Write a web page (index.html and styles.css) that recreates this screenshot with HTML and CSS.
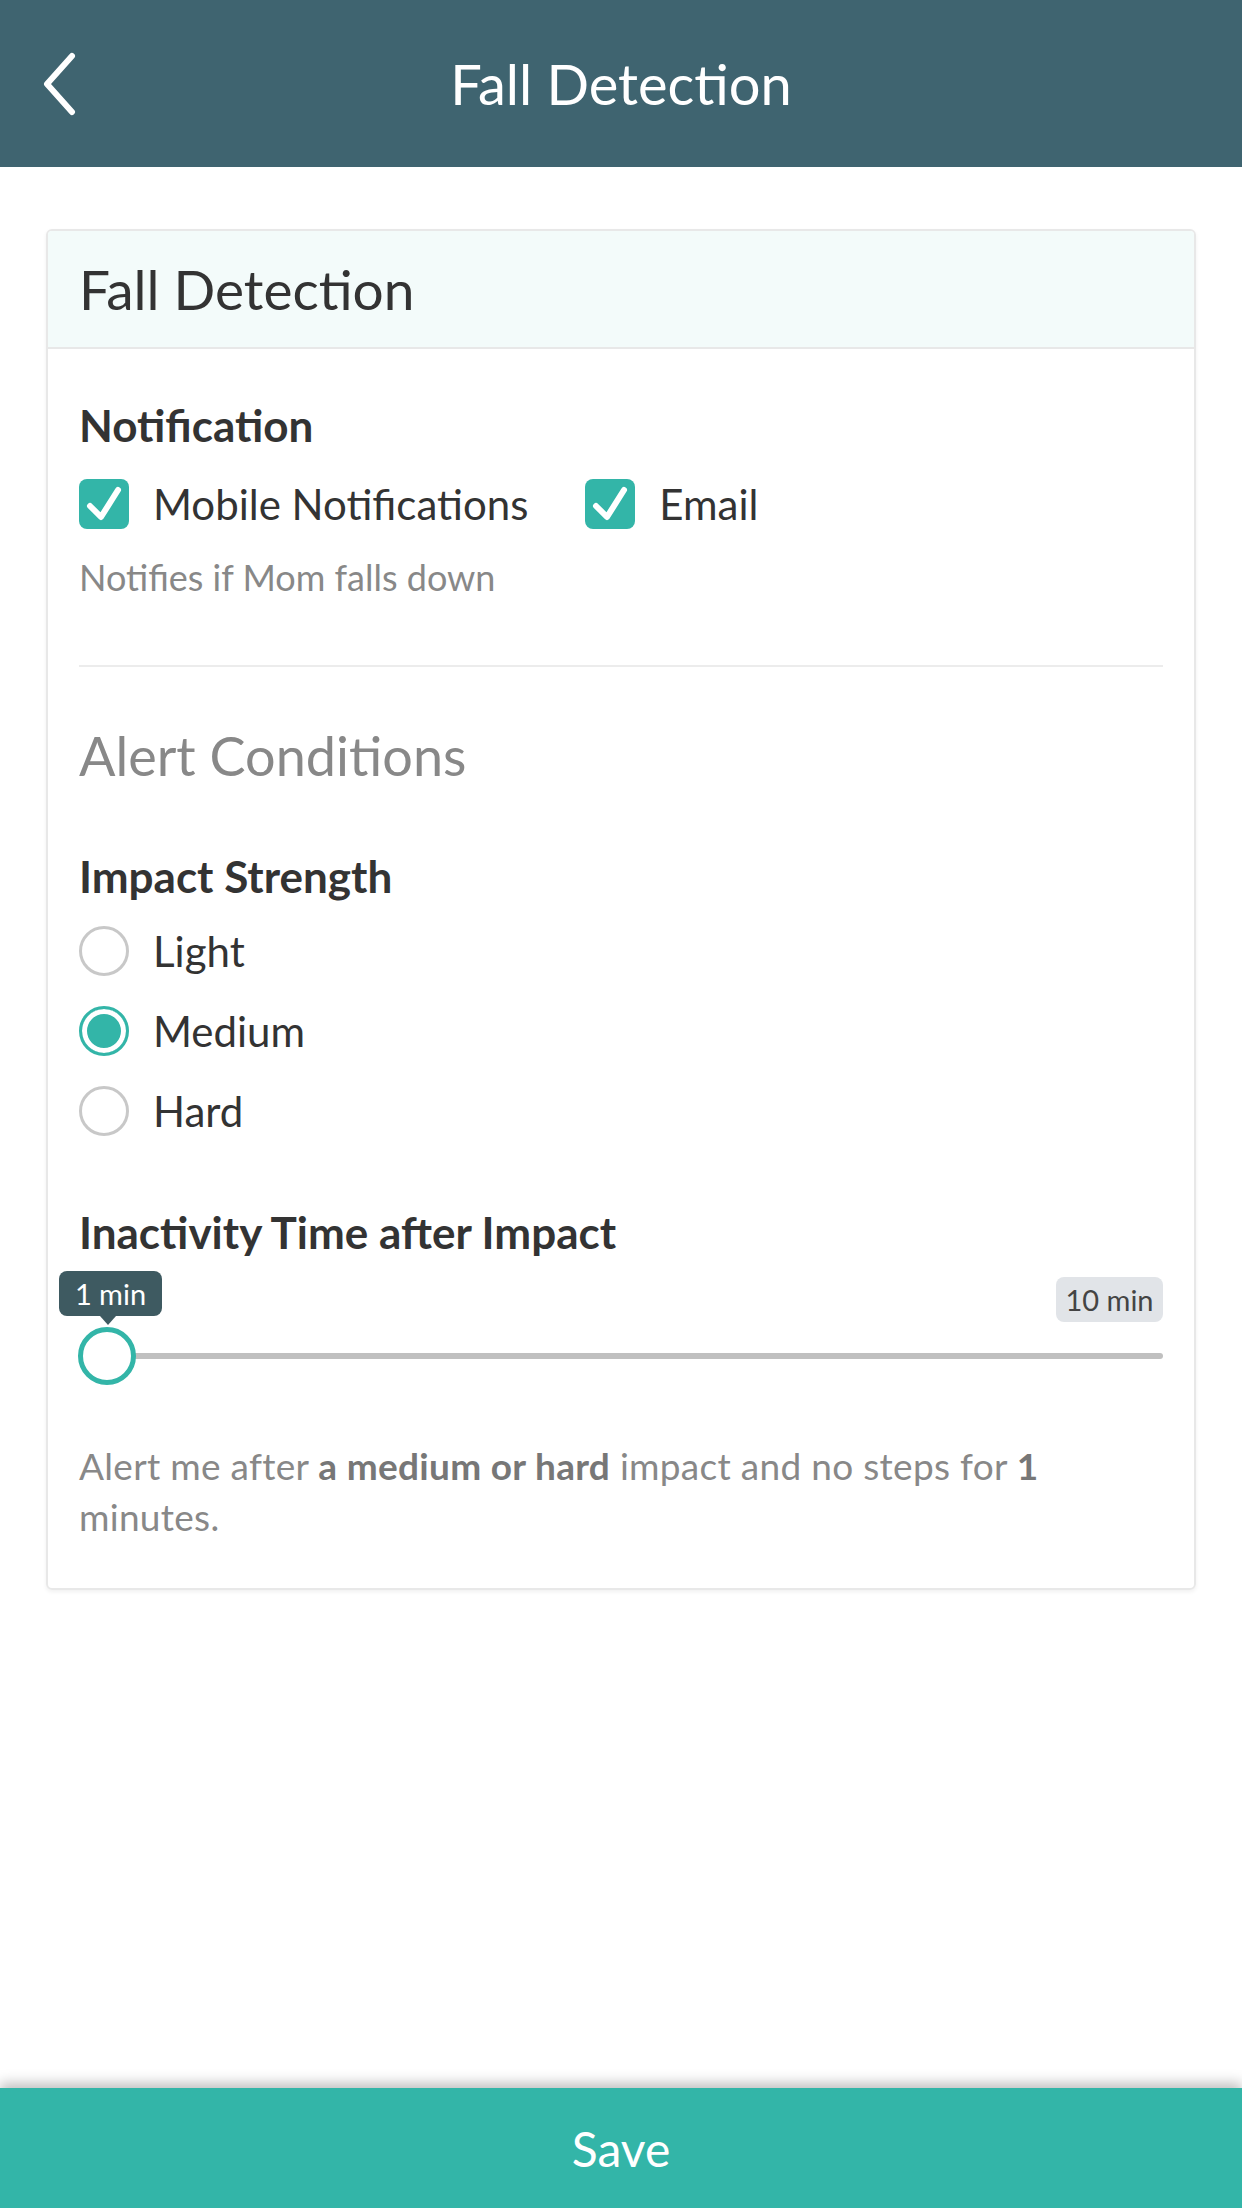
FILE: index.html
```html
<!DOCTYPE html>
<html lang="en">
<head>
<meta charset="utf-8">
<title>Fall Detection</title>
<link rel="stylesheet" href="styles.css">
</head>
<body>
<header class="topbar">
  <button class="back" aria-label="Back">
    <svg width="40" height="64" viewBox="0 0 40 64"><polyline points="30,4 5,32 30,60" fill="none" stroke="#fff" stroke-width="6" stroke-linecap="round" stroke-linejoin="round"/></svg>
  </button>
  <h1 class="topbar-title">Fall Detection</h1>
  <span class="spacer"></span>
</header>

<main class="content">
  <section class="card">
    <div class="card-head">Fall Detection</div>
    <div class="card-body">
      <div class="label notif-label">Notification</div>
      <div class="check-row">
        <label class="check">
          <span class="box"><svg width="50" height="50" viewBox="0 0 50 50"><polyline points="11,27 22,38 39,11" fill="none" stroke="#fff" stroke-width="6" stroke-linecap="round" stroke-linejoin="round"/></svg></span>
          <span>Mobile Notifications</span>
        </label>
        <label class="check">
          <span class="box"><svg width="50" height="50" viewBox="0 0 50 50"><polyline points="11,27 22,38 39,11" fill="none" stroke="#fff" stroke-width="6" stroke-linecap="round" stroke-linejoin="round"/></svg></span>
          <span>Email</span>
        </label>
      </div>
      <p class="note">Notifies if Mom falls down</p>
      <hr class="divider">
      <h2 class="sub-title">Alert Conditions</h2>
      <div class="label impact-label">Impact Strength</div>
      <div class="radios">
        <label class="radio"><span class="dot"></span><span>Light</span></label>
        <label class="radio selected"><span class="dot"></span><span>Medium</span></label>
        <label class="radio"><span class="dot"></span><span>Hard</span></label>
      </div>
      <div class="label inact-label">Inactivity Time after Impact</div>
      <div class="slider">
        <div class="slider-labels">
          <span class="tip">1 min</span>
          <span class="max">10 min</span>
        </div>
        <div class="track-row">
          <div class="track"></div>
          <span class="thumb"></span>
        </div>
      </div>
      <p class="summary">Alert me after <b>a medium or hard</b> impact and no steps for <b>1</b> minutes.</p>
    </div>
  </section>
</main>

<footer class="savebar">Save</footer>
</body>
</html>
```

FILE: styles.css
```css
* { box-sizing: border-box; }
html, body { margin: 0; padding: 0; }
body {
  width: 1242px;
  height: 2208px;
  display: flex;
  flex-direction: column;
  font-family: Lato, "Open Sans", sans-serif;
  color: #333;
  background: #fff;
  overflow: hidden;
}

.topbar {
  height: 167px;
  background: #3f6470;
  display: flex;
  align-items: center;
  flex-shrink: 0;
}
.back {
  width: 120px;
  height: 100%;
  background: none;
  border: 0;
  padding: 0 0 0 42px;
  display: flex;
  align-items: center;
  cursor: pointer;
}
.topbar-title {
  flex: 1;
  margin: 0;
  text-align: center;
  color: #fff;
  font-weight: 400;
  font-size: 56px;
  line-height: 1;
}
.spacer { width: 120px; }

.content {
  padding: 62px 46px 0;
}
.card {
  border: 2px solid #e8e8e8;
  border-radius: 6px;
  box-shadow: 0 2px 4px rgba(0,0,0,0.06);
  overflow: hidden;
}
.card-head {
  height: 118px;
  background: #f3fbfa;
  border-bottom: 2px solid #e8e8e8;
  padding-left: 31px;
  display: flex;
  align-items: center;
  font-size: 55px;
  color: #333;
}
.card-body {
  padding: 40px 31px 46px;
}

.label {
  font-weight: 700;
  font-size: 44px;
  color: #333;
}
.notif-label { line-height: 72px; }

.check-row {
  margin-top: 12px;
  height: 62px;
  display: flex;
  align-items: center;
  gap: 57px;
}
.check {
  display: flex;
  align-items: center;
  gap: 24px;
  font-size: 42px;
}
.box {
  width: 50px;
  height: 50px;
  border-radius: 8px;
  background: #33b5a8;
  display: block;
}
.box svg { display: block; }

.note {
  margin: 20px 0 0;
  font-size: 36px;
  line-height: 44px;
  color: #888;
}
.divider {
  margin: 66px 0 0;
  border: 0;
  border-top: 2px solid #ececec;
}
.sub-title {
  margin: 54px 0 0;
  font-size: 54px;
  line-height: 70px;
  font-weight: 400;
  color: #888;
}
.impact-label { margin-top: 55px; line-height: 60px; }

.radios { margin-top: 5px; }
.radio {
  height: 80px;
  display: flex;
  align-items: center;
  gap: 24px;
  font-size: 42px;
}
.dot {
  width: 50px;
  height: 50px;
  border-radius: 50%;
  border: 3px solid #c8c8c8;
  display: block;
  background: #fff;
}
.radio.selected .dot {
  border-color: #33b5a8;
  box-shadow: inset 0 0 0 5px #fff, inset 0 0 0 30px #33b5a8;
}

.inact-label { margin-top: 51px; line-height: 60px; }

.slider { margin-top: 9px; }
.slider-labels {
  display: flex;
  justify-content: space-between;
  align-items: flex-start;
}
.tip {
  position: relative;
  margin-left: -20px;
  width: 103px;
  height: 45px;
  border-radius: 8px;
  background: #3e5a61;
  color: #fff;
  font-size: 29px;
  display: flex;
  align-items: center;
  justify-content: center;
}
.tip::after {
  content: "";
  position: absolute;
  left: 41px;
  bottom: -9px;
  border-left: 8px solid transparent;
  border-right: 8px solid transparent;
  border-top: 9px solid #3e5a61;
}
.max {
  margin-top: 6px;
  width: 107px;
  height: 45px;
  border-radius: 8px;
  background: #e1e4e8;
  color: #444;
  font-size: 29px;
  display: flex;
  align-items: center;
  justify-content: center;
}
.track-row {
  position: relative;
  margin-top: 5px;
  height: 58px;
  display: flex;
  align-items: center;
}
.track {
  flex: 1;
  height: 6px;
  border-radius: 3px;
  background: #c0c0c0;
}
.thumb {
  position: absolute;
  left: -1px;
  top: 0;
  width: 58px;
  height: 58px;
  border-radius: 50%;
  border: 5px solid #33b5a8;
  background: #fff;
}

.summary {
  margin: 55px 0 0;
  font-size: 37px;
  letter-spacing: 0.3px;
  line-height: 51px;
  color: #888;
}
.summary b { color: #777; }

.savebar {
  margin-top: auto;
  height: 120px;
  flex-shrink: 0;
  background: #33b5a8;
  color: #fff;
  font-size: 48px;
  display: flex;
  align-items: center;
  justify-content: center;
  box-shadow: 0 -5px 12px rgba(0,0,0,0.25);
}
```
